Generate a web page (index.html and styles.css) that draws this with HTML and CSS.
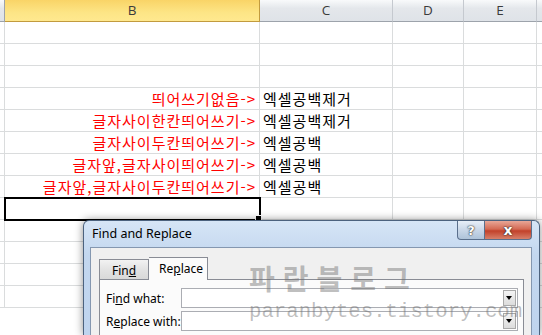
FILE: index.html
```html
<!DOCTYPE html>
<html lang="ko">
<head>
    <meta charset="UTF-8">
    <title>엑셀 공백 제거</title>
    <link rel="stylesheet" href="styles.css">
</head>
<body>

<div class="sheet">
    <div class="row head">
        <div class="cell"></div>
        <div class="cell active">B</div>
        <div class="cell">C</div>
        <div class="cell">D</div>
        <div class="cell">E</div>
        <div class="cell"></div>
    </div>
    <div class="row"><div class="cell"></div><div class="cell"></div><div class="cell"></div><div class="cell"></div><div class="cell"></div><div class="cell"></div></div>
    <div class="row"><div class="cell"></div><div class="cell"></div><div class="cell"></div><div class="cell"></div><div class="cell"></div><div class="cell"></div></div>
    <div class="row"><div class="cell"></div><div class="cell"></div><div class="cell"></div><div class="cell"></div><div class="cell"></div><div class="cell"></div></div>
    <div class="row">
        <div class="cell"></div>
        <div class="cell red">띄어쓰기없음-&gt;</div>
        <div class="cell txt">엑셀공백제거</div>
        <div class="cell"></div><div class="cell"></div><div class="cell"></div>
    </div>
    <div class="row">
        <div class="cell"></div>
        <div class="cell red">글자사이한칸띄어쓰기-&gt;</div>
        <div class="cell txt">엑셀공백제거</div>
        <div class="cell"></div><div class="cell"></div><div class="cell"></div>
    </div>
    <div class="row">
        <div class="cell"></div>
        <div class="cell red">글자사이두칸띄어쓰기-&gt;</div>
        <div class="cell txt">엑셀공백</div>
        <div class="cell"></div><div class="cell"></div><div class="cell"></div>
    </div>
    <div class="row">
        <div class="cell"></div>
        <div class="cell red">글자앞,글자사이띄어쓰기-&gt;</div>
        <div class="cell txt">엑셀공백</div>
        <div class="cell"></div><div class="cell"></div><div class="cell"></div>
    </div>
    <div class="row">
        <div class="cell"></div>
        <div class="cell red">글자앞,글자사이두칸띄어쓰기-&gt;</div>
        <div class="cell txt">엑셀공백</div>
        <div class="cell"></div><div class="cell"></div><div class="cell"></div>
    </div>
    <div class="row"><div class="cell"></div><div class="cell selected"></div><div class="cell"></div><div class="cell"></div><div class="cell"></div><div class="cell"></div></div>
    <div class="row"><div class="cell"></div><div class="cell"></div><div class="cell"></div><div class="cell"></div><div class="cell"></div><div class="cell"></div></div>
    <div class="row"><div class="cell"></div><div class="cell"></div><div class="cell"></div><div class="cell"></div><div class="cell"></div><div class="cell"></div></div>
    <div class="row"><div class="cell"></div><div class="cell"></div><div class="cell"></div><div class="cell"></div><div class="cell"></div><div class="cell"></div></div>
    <div class="row"><div class="cell"></div><div class="cell"></div><div class="cell"></div><div class="cell"></div><div class="cell"></div><div class="cell"></div></div>
</div>

<!-- 찾기 및 바꾸기 창 -->
<div class="dialog">
    <div class="titlebar">
        <span class="title">Find and Replace</span>
        <div class="caption-btns">
            <span class="cbtn help">?</span>
            <span class="cbtn close">x</span>
        </div>
    </div>
    <div class="client">
        <div class="tabs">
            <span class="tab">Fin<u>d</u></span>
            <span class="tab on">Re<u>p</u>lace</span>
        </div>
        <div class="panel">
            <div class="field">
                <label>Fi<u>n</u>d what:</label>
                <div class="combo"><span class="drop"></span></div>
            </div>
            <div class="field">
                <label>R<u>e</u>place with:</label>
                <div class="combo"><span class="drop"></span></div>
            </div>
        </div>
    </div>
</div>

<div class="watermark">
    <div class="wm-ko">파란블로그</div>
    <div class="wm-url">paranbytes.tistory.com</div>
</div>

</body>
</html>
```

FILE: styles.css
```css
/* 기본 */
body {
    margin: 0;
    width: 542px;
    height: 335px;
    overflow: hidden;
    background: #fff;
    position: relative;
    font-family: "Noto Sans CJK KR", sans-serif;
}
.sheet {
    height: 335px;
    overflow: hidden;
}

/* 시트 */
.row {
    display: grid;
    grid-template-columns: 5px 255px 133px 71px 73px 20px;
    height: 22px;
}
.cell {
    box-sizing: border-box;
    border-right: 1px solid #dadcdd;
    border-bottom: 1px solid #dadcdd;
    font-size: 15px;
    letter-spacing: 1px;
    line-height: 22px;
    white-space: nowrap;
    overflow: hidden;
}
.head .cell {
    background: linear-gradient(#f9fafb, #e4e7eb 40%, #dfe3e8);
    border-right-color: #c5c9cf;
    border-bottom-color: #9da3ab;
    font-family: "Open Sans", sans-serif;
    font-size: 13.5px;
    letter-spacing: 0;
    color: #3b3b3b;
    text-align: center;
    line-height: 21px;
}
.head .cell:first-child {
    border-right-color: #9da3ab;
}
.head .cell.active {
    background: linear-gradient(#f9d467, #fde586 60%, #ffe98f);
    border-right-color: #c29b3e;
    border-bottom-color: #c29b3e;
}
.red {
    color: #ff0000;
    text-align: right;
    padding-right: 3px;
}
.txt {
    color: #000;
    padding-left: 3px;
}
.selected {
    position: relative;
    overflow: visible;
    outline: 2px solid #000;
    outline-offset: -1px;
}
.selected::after {
    content: "";
    position: absolute;
    right: -3px;
    bottom: -3px;
    width: 5px;
    height: 5px;
    background: #000;
    border: 1px solid #fff;
}

/* 대화상자 */
.dialog {
    position: absolute;
    left: 83px;
    top: 220px;
    width: 457px;
    height: 115px;
    box-sizing: border-box;
    border: 1px solid #4c627e;
    border-bottom: none;
    border-radius: 6px 6px 0 0;
    background: linear-gradient(#d6e5f6, #c3d7ef 30%, #bfd4ee);
    box-shadow: 0 0 9px rgba(0, 0, 0, 0.45);
    font-family: "Noto Sans", sans-serif;
    font-size: 12px;
    color: #000;
    overflow: hidden;
}
.titlebar {
    display: flex;
    justify-content: space-between;
    height: 26px;
}
.title {
    padding: 4px 0 0 8px;
    font-size: 12.5px;
}
.caption-btns {
    display: flex;
    margin-right: 7px;
    height: 19px;
}
.cbtn {
    display: flex;
    align-items: center;
    justify-content: center;
    box-sizing: border-box;
    border: 1px solid #5a6f8c;
    border-top: none;
    color: #fff;
    font-weight: bold;
    font-family: "DejaVu Sans", sans-serif;
    text-shadow: 0 0 2px #333, 0 0 1px #000;
}
.help {
    width: 28px;
    font-size: 13px;
    background: linear-gradient(#e8eff8, #c9d7e8 50%, #aec3da);
    border-radius: 0 0 0 4px;
}
.close {
    width: 47px;
    font-size: 14px;
    background: linear-gradient(#e8a797, #d46a54 45%, #c2412a 55%, #d7806a);
    border-left: none;
    border-radius: 0 0 4px 0;
}
.client {
    margin: 0 7px 0 6px;
    height: 110px;
    box-sizing: border-box;
    border: 1px solid #8497b0;
    background: #f0f0f0;
    padding: 8px 7px 0 8px;
}
.tabs {
    display: flex;
    align-items: flex-end;
    height: 23px;
    position: relative;
    z-index: 1;
}
.tab {
    box-sizing: border-box;
    height: 20px;
    padding: 0 10px;
    border: 1px solid #898c95;
    border-bottom: none;
    background: linear-gradient(#f2f2f2, #e3e3e3 50%, #d9d9d9);
    line-height: 21px;
    width: 50px;
    text-align: center;
}
.tab.on {
    height: 23px;
    width: 59px;
    margin-bottom: -1px;
    border-left: none;
    background: #fbfbfb;
    line-height: 21px;
}
.panel {
    border: 1px solid #898c95;
    background: #fbfbfb;
    height: 70px;
    padding: 8px 0 0 6px;
}
.field {
    display: flex;
    align-items: center;
    height: 20px;
    margin-bottom: 3px;
}
.field label {
    width: 75px;
}
.combo {
    position: relative;
    box-sizing: border-box;
    width: 337px;
    height: 20px;
    border: 1px solid #abadb3;
    background: #fff;
}
.drop {
    position: absolute;
    right: 1px;
    top: 1px;
    width: 13px;
    height: 16px;
    box-sizing: border-box;
    border: 1px solid #a9a9a9;
    background: linear-gradient(#f4f4f4, #dcdcdc);
}
.drop::after {
    content: "";
    position: absolute;
    left: 2px;
    top: 5px;
    border-left: 3.5px solid transparent;
    border-right: 3.5px solid transparent;
    border-top: 4px solid #000;
}

/* 워터마크 */
.watermark {
    position: absolute;
    left: 249px;
    top: 261px;
    color: rgba(110, 110, 110, 0.45);
}
.wm-ko {
    font-family: "Noto Sans CJK KR", sans-serif;
    font-size: 28px;
    font-weight: bold;
    letter-spacing: 8px;
    line-height: 34px;
}
.wm-url {
    font-family: "Liberation Mono", monospace;
    font-size: 20.7px;
    line-height: 24px;
    margin-top: 5px;
}
```
